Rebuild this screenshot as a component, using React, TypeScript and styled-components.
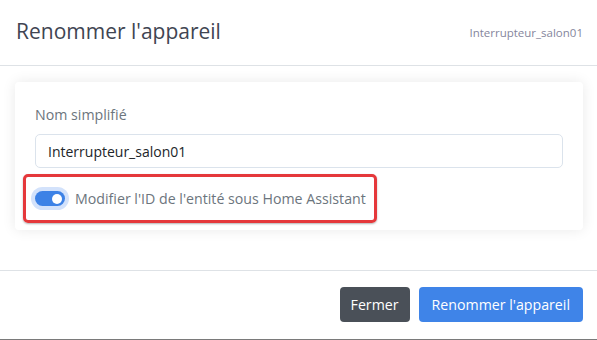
import React from "react";
import styled, { createGlobalStyle } from "styled-components";

const Global = createGlobalStyle`
  html, body { margin: 0; padding: 0; background: #ffffff; }
  body { font-family: "Open Sans", "Noto Sans", sans-serif; }
  * { box-sizing: border-box; }
`;

const Modal = styled.div`
  width: 597px;
  height: 340px;
  background: #ffffff;
  display: flex;
  flex-direction: column;
  border-bottom: 1px solid #7a7a7a;
  overflow: hidden;
`;

const Header = styled.div`
  height: 66px;
  border-bottom: 1px solid #dee2e6;
  display: flex;
  align-items: center;
  justify-content: space-between;
  padding: 0 14px 4px 16px;
`;

const Title = styled.h5`
  margin: 0;
  font-size: 21px;
  font-weight: 400;
  color: #3f4552;
  line-height: 28px;
`;

const Entity = styled.span`
  font-size: 11.5px;
  color: #85869c;
  padding-top: 4px;
`;

const Body = styled.div`
  height: 205px;
  padding: 16px 14px 0 15px;
  border-bottom: 1px solid #dee2e6;
`;

const Card = styled.div`
  height: 148px;
  background: #fff;
  border-radius: 4px;
  box-shadow: 0 0 14px rgba(0, 0, 0, 0.09);
  padding: 21px 20px 0 20px;
  display: flex;
  flex-direction: column;
`;

const Label = styled.label`
  font-size: 14.2px;
  line-height: 24px;
  color: #6c757d;
  margin-bottom: 7px;
`;

const Input = styled.div`
  height: 34px;
  border: 1px solid #dbe3ec;
  border-radius: 5px;
  display: flex;
  align-items: center;
  padding: 0 12px;
  font-size: 14px;
  color: #212529;
`;

const Highlight = styled.div`
  margin: 6px 0 0 -12px;
  width: fit-content;
  height: 49px;
  border: 3px solid #e5383b;
  border-radius: 5px;
  display: flex;
  align-items: center;
  gap: 6px;
  padding: 0 8px 0 5px;
  box-shadow: 0 1px 2px rgba(0,0,0,0.3);
`;

const Switch = styled.span`
  position: relative;
  width: 30px;
  height: 15px;
  border-radius: 8px;
  background: #3d82e6;
  box-shadow: 0 0 0 4px #d3e2fb;
  margin-left: 4px;
  flex: none;
`;

const Knob = styled.span`
  position: absolute;
  right: 3px;
  top: 2.5px;
  width: 10px;
  height: 10px;
  border-radius: 50%;
  background: #fff;
`;

const CheckText = styled.span`
  font-size: 14.2px;
  color: #6c757d;
  margin-left: 4px;
`;

const Footer = styled.div`
  flex: 1;
  display: flex;
  justify-content: flex-end;
  align-items: flex-start;
  gap: 9px;
  padding: 16px 14px 0 0;
`;

const Button = styled.button<{ $variant: "secondary" | "primary" }>`
  height: 35px;
  border: none;
  border-radius: 4px;
  padding: 0 ${(p) => (p.$variant === "primary" ? "13px" : "11px")};
  font-family: inherit;
  font-size: 14.2px;
  color: #fff;
  background: ${(p) => (p.$variant === "primary" ? "#3f84e8" : "#4a5058")};
`;

export default function App() {
  return (
    <>
      <Global />
      <Modal>
        <Header>
          <Title>Renommer l'appareil</Title>
          <Entity>Interrupteur_salon01</Entity>
        </Header>
        <Body>
          <Card>
            <Label>Nom simplifié</Label>
            <Input>Interrupteur_salon01</Input>
            <Highlight>
              <Switch>
                <Knob />
              </Switch>
              <CheckText>Modifier l'ID de l'entité sous Home Assistant</CheckText>
            </Highlight>
          </Card>
        </Body>
        <Footer>
          <Button $variant="secondary">Fermer</Button>
          <Button $variant="primary">Renommer l'appareil</Button>
        </Footer>
      </Modal>
    </>
  );
}
